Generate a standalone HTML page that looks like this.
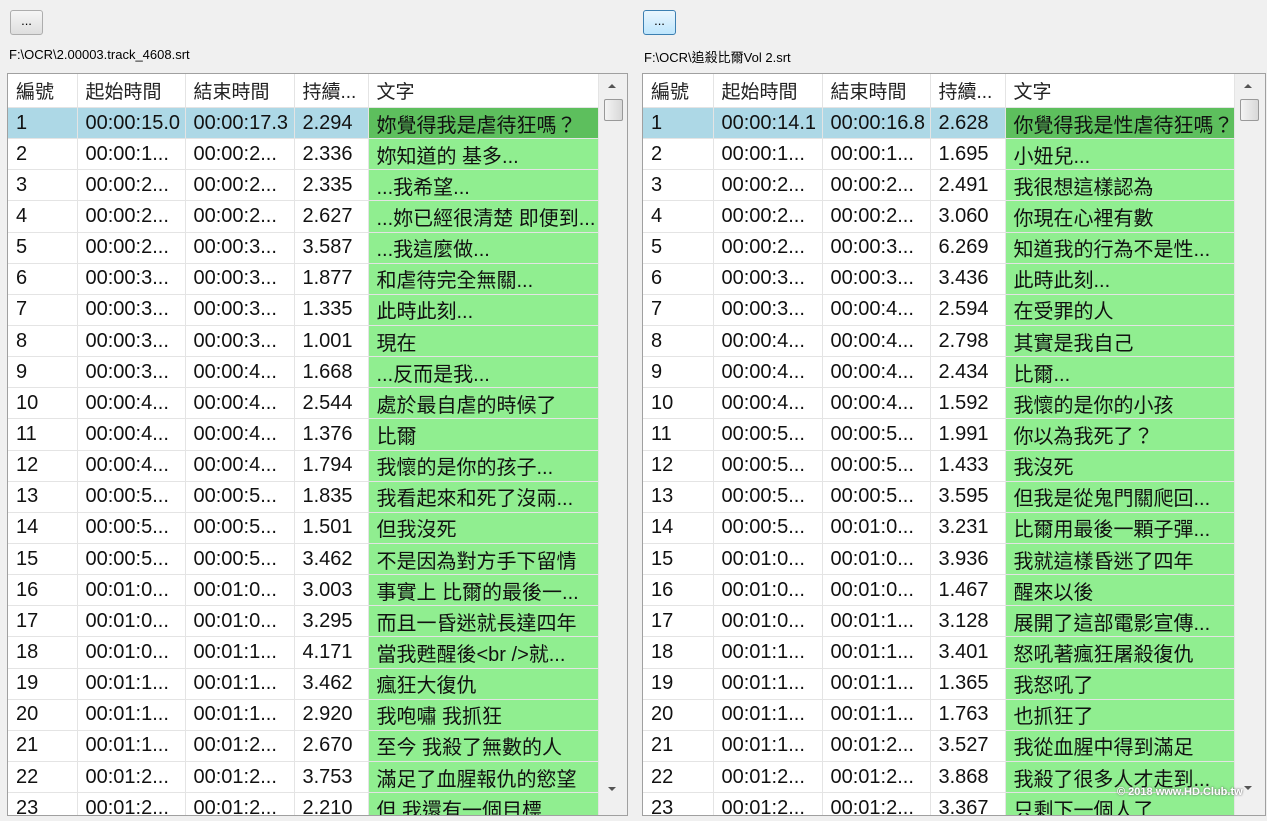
<!DOCTYPE html>
<html><head><meta charset="utf-8"><style>
html,body{margin:0;width:1267px;height:821px;overflow:hidden}
body{background:#f0f0f0;position:relative;font-family:"Liberation Sans","Noto Sans CJK TC",sans-serif;}
.btn{position:absolute;top:10px;width:33px;height:25px;border:1px solid #adadad;border-radius:3px;background:linear-gradient(#f6f6f6,#dedede);font-size:13px;text-align:center;line-height:19px;color:#000;box-sizing:border-box}
.path{position:absolute;top:47px;font-size:13px;color:#000}
.box{position:absolute;top:73px;height:741px;border:1px solid #a0a0a0;background:#fff;overflow:hidden}
table{border-collapse:collapse;table-layout:fixed;position:absolute;left:0;top:0}
td,th{height:30.15px;border-right:1px solid #e4e4e4;border-bottom:1px solid #e4e4e4;padding:0 0 0 8px;font-size:20px;white-space:nowrap;overflow:hidden;text-align:left;font-weight:normal;color:#111}
th{height:33px;background:#fff;color:#222;font-size:19px}
td.t{background:#90ee90}
tr.sel td{background:#add8e6}
tr.sel td.t{background:#5dbf5d}
.sb{position:absolute;top:0;right:0;width:28px;height:100%;background:#f0f0f0;border-left:1px solid #e4e4e4}
.thumb{position:absolute;left:5px;top:25px;width:17px;height:20px;border:1px solid #999;border-radius:2px;background:linear-gradient(90deg,#f4f4f4,#d8d8d8)}
.up{position:absolute;left:9px;top:10px;width:0;height:0;border-left:4px solid transparent;border-right:4px solid transparent;border-bottom:4px solid #555}
.dn{position:absolute;left:9px;top:713px;width:0;height:0;border-left:4px solid transparent;border-right:4px solid transparent;border-top:4px solid #555}
</style></head><body>
<div class="btn" style="left:10px">...</div>
<div class="btn" style="left:643px;border-color:#3c7fb1;background:linear-gradient(#eaf6fd,#bee6fd)">...</div>
<div class="path" style="left:9px">F:\OCR\2.00003.track_4608.srt</div>
<div class="path" style="left:644px">F:\OCR\追殺比爾Vol 2.srt</div>

<div class="box" style="left:7px;width:619px">
<table style="width:590px">
<colgroup><col style="width:69px"><col style="width:108px"><col style="width:109px"><col style="width:74px"><col style="width:230px"></colgroup>
<tr><th>編號</th><th>起始時間</th><th>結束時間</th><th>持續...</th><th>文字</th></tr>
<tr class="sel"><td>1</td><td>00:00:15.0</td><td>00:00:17.3</td><td>2.294</td><td class="t">妳覺得我是虐待狂嗎？</td></tr>
<tr><td>2</td><td>00:00:1...</td><td>00:00:2...</td><td>2.336</td><td class="t">妳知道的 基多...</td></tr>
<tr><td>3</td><td>00:00:2...</td><td>00:00:2...</td><td>2.335</td><td class="t">...我希望...</td></tr>
<tr><td>4</td><td>00:00:2...</td><td>00:00:2...</td><td>2.627</td><td class="t">...妳已經很清楚 即便到...</td></tr>
<tr><td>5</td><td>00:00:2...</td><td>00:00:3...</td><td>3.587</td><td class="t">...我這麼做...</td></tr>
<tr><td>6</td><td>00:00:3...</td><td>00:00:3...</td><td>1.877</td><td class="t">和虐待完全無關...</td></tr>
<tr><td>7</td><td>00:00:3...</td><td>00:00:3...</td><td>1.335</td><td class="t">此時此刻...</td></tr>
<tr><td>8</td><td>00:00:3...</td><td>00:00:3...</td><td>1.001</td><td class="t">現在</td></tr>
<tr><td>9</td><td>00:00:3...</td><td>00:00:4...</td><td>1.668</td><td class="t">...反而是我...</td></tr>
<tr><td>10</td><td>00:00:4...</td><td>00:00:4...</td><td>2.544</td><td class="t">處於最自虐的時候了</td></tr>
<tr><td>11</td><td>00:00:4...</td><td>00:00:4...</td><td>1.376</td><td class="t">比爾</td></tr>
<tr><td>12</td><td>00:00:4...</td><td>00:00:4...</td><td>1.794</td><td class="t">我懷的是你的孩子...</td></tr>
<tr><td>13</td><td>00:00:5...</td><td>00:00:5...</td><td>1.835</td><td class="t">我看起來和死了沒兩...</td></tr>
<tr><td>14</td><td>00:00:5...</td><td>00:00:5...</td><td>1.501</td><td class="t">但我沒死</td></tr>
<tr><td>15</td><td>00:00:5...</td><td>00:00:5...</td><td>3.462</td><td class="t">不是因為對方手下留情</td></tr>
<tr><td>16</td><td>00:01:0...</td><td>00:01:0...</td><td>3.003</td><td class="t">事實上 比爾的最後一...</td></tr>
<tr><td>17</td><td>00:01:0...</td><td>00:01:0...</td><td>3.295</td><td class="t">而且一昏迷就長達四年</td></tr>
<tr><td>18</td><td>00:01:0...</td><td>00:01:1...</td><td>4.171</td><td class="t">當我甦醒後&lt;br /&gt;就...</td></tr>
<tr><td>19</td><td>00:01:1...</td><td>00:01:1...</td><td>3.462</td><td class="t">瘋狂大復仇</td></tr>
<tr><td>20</td><td>00:01:1...</td><td>00:01:1...</td><td>2.920</td><td class="t">我咆嘯 我抓狂</td></tr>
<tr><td>21</td><td>00:01:1...</td><td>00:01:2...</td><td>2.670</td><td class="t">至今 我殺了無數的人</td></tr>
<tr><td>22</td><td>00:01:2...</td><td>00:01:2...</td><td>3.753</td><td class="t">滿足了血腥報仇的慾望</td></tr>
<tr><td>23</td><td>00:01:2...</td><td>00:01:2...</td><td>2.210</td><td class="t">但 我還有一個目標</td></tr>
</table>
<div class="sb"><div class="up"></div><div class="thumb"></div><div class="dn"></div></div>
</div>

<div class="box" style="left:642px;width:622px">
<table style="width:592px">
<colgroup><col style="width:70px"><col style="width:109px"><col style="width:108px"><col style="width:75px"><col style="width:230px"></colgroup>
<tr><th>編號</th><th>起始時間</th><th>結束時間</th><th>持續...</th><th>文字</th></tr>
<tr class="sel"><td>1</td><td>00:00:14.1</td><td>00:00:16.8</td><td>2.628</td><td class="t">你覺得我是性虐待狂嗎？</td></tr>
<tr><td>2</td><td>00:00:1...</td><td>00:00:1...</td><td>1.695</td><td class="t">小妞兒...</td></tr>
<tr><td>3</td><td>00:00:2...</td><td>00:00:2...</td><td>2.491</td><td class="t">我很想這樣認為</td></tr>
<tr><td>4</td><td>00:00:2...</td><td>00:00:2...</td><td>3.060</td><td class="t">你現在心裡有數</td></tr>
<tr><td>5</td><td>00:00:2...</td><td>00:00:3...</td><td>6.269</td><td class="t">知道我的行為不是性...</td></tr>
<tr><td>6</td><td>00:00:3...</td><td>00:00:3...</td><td>3.436</td><td class="t">此時此刻...</td></tr>
<tr><td>7</td><td>00:00:3...</td><td>00:00:4...</td><td>2.594</td><td class="t">在受罪的人</td></tr>
<tr><td>8</td><td>00:00:4...</td><td>00:00:4...</td><td>2.798</td><td class="t">其實是我自己</td></tr>
<tr><td>9</td><td>00:00:4...</td><td>00:00:4...</td><td>2.434</td><td class="t">比爾...</td></tr>
<tr><td>10</td><td>00:00:4...</td><td>00:00:4...</td><td>1.592</td><td class="t">我懷的是你的小孩</td></tr>
<tr><td>11</td><td>00:00:5...</td><td>00:00:5...</td><td>1.991</td><td class="t">你以為我死了？</td></tr>
<tr><td>12</td><td>00:00:5...</td><td>00:00:5...</td><td>1.433</td><td class="t">我沒死</td></tr>
<tr><td>13</td><td>00:00:5...</td><td>00:00:5...</td><td>3.595</td><td class="t">但我是從鬼門關爬回...</td></tr>
<tr><td>14</td><td>00:00:5...</td><td>00:01:0...</td><td>3.231</td><td class="t">比爾用最後一顆子彈...</td></tr>
<tr><td>15</td><td>00:01:0...</td><td>00:01:0...</td><td>3.936</td><td class="t">我就這樣昏迷了四年</td></tr>
<tr><td>16</td><td>00:01:0...</td><td>00:01:0...</td><td>1.467</td><td class="t">醒來以後</td></tr>
<tr><td>17</td><td>00:01:0...</td><td>00:01:1...</td><td>3.128</td><td class="t">展開了這部電影宣傳...</td></tr>
<tr><td>18</td><td>00:01:1...</td><td>00:01:1...</td><td>3.401</td><td class="t">怒吼著瘋狂屠殺復仇</td></tr>
<tr><td>19</td><td>00:01:1...</td><td>00:01:1...</td><td>1.365</td><td class="t">我怒吼了</td></tr>
<tr><td>20</td><td>00:01:1...</td><td>00:01:1...</td><td>1.763</td><td class="t">也抓狂了</td></tr>
<tr><td>21</td><td>00:01:1...</td><td>00:01:2...</td><td>3.527</td><td class="t">我從血腥中得到滿足</td></tr>
<tr><td>22</td><td>00:01:2...</td><td>00:01:2...</td><td>3.868</td><td class="t">我殺了很多人才走到...</td></tr>
<tr><td>23</td><td>00:01:2...</td><td>00:01:2...</td><td>3.367</td><td class="t">只剩下一個人了</td></tr>
</table>
<div class="sb" style="width:30px"><div class="up"></div><div class="thumb"></div><div class="dn" style="top:712px"></div></div>
</div>
<div style="position:absolute;left:1117px;top:786px;font-size:11px;color:#fff;font-weight:bold;text-shadow:0 0 2px #555">© 2018 www.HD.Club.tw</div>
</body></html>
